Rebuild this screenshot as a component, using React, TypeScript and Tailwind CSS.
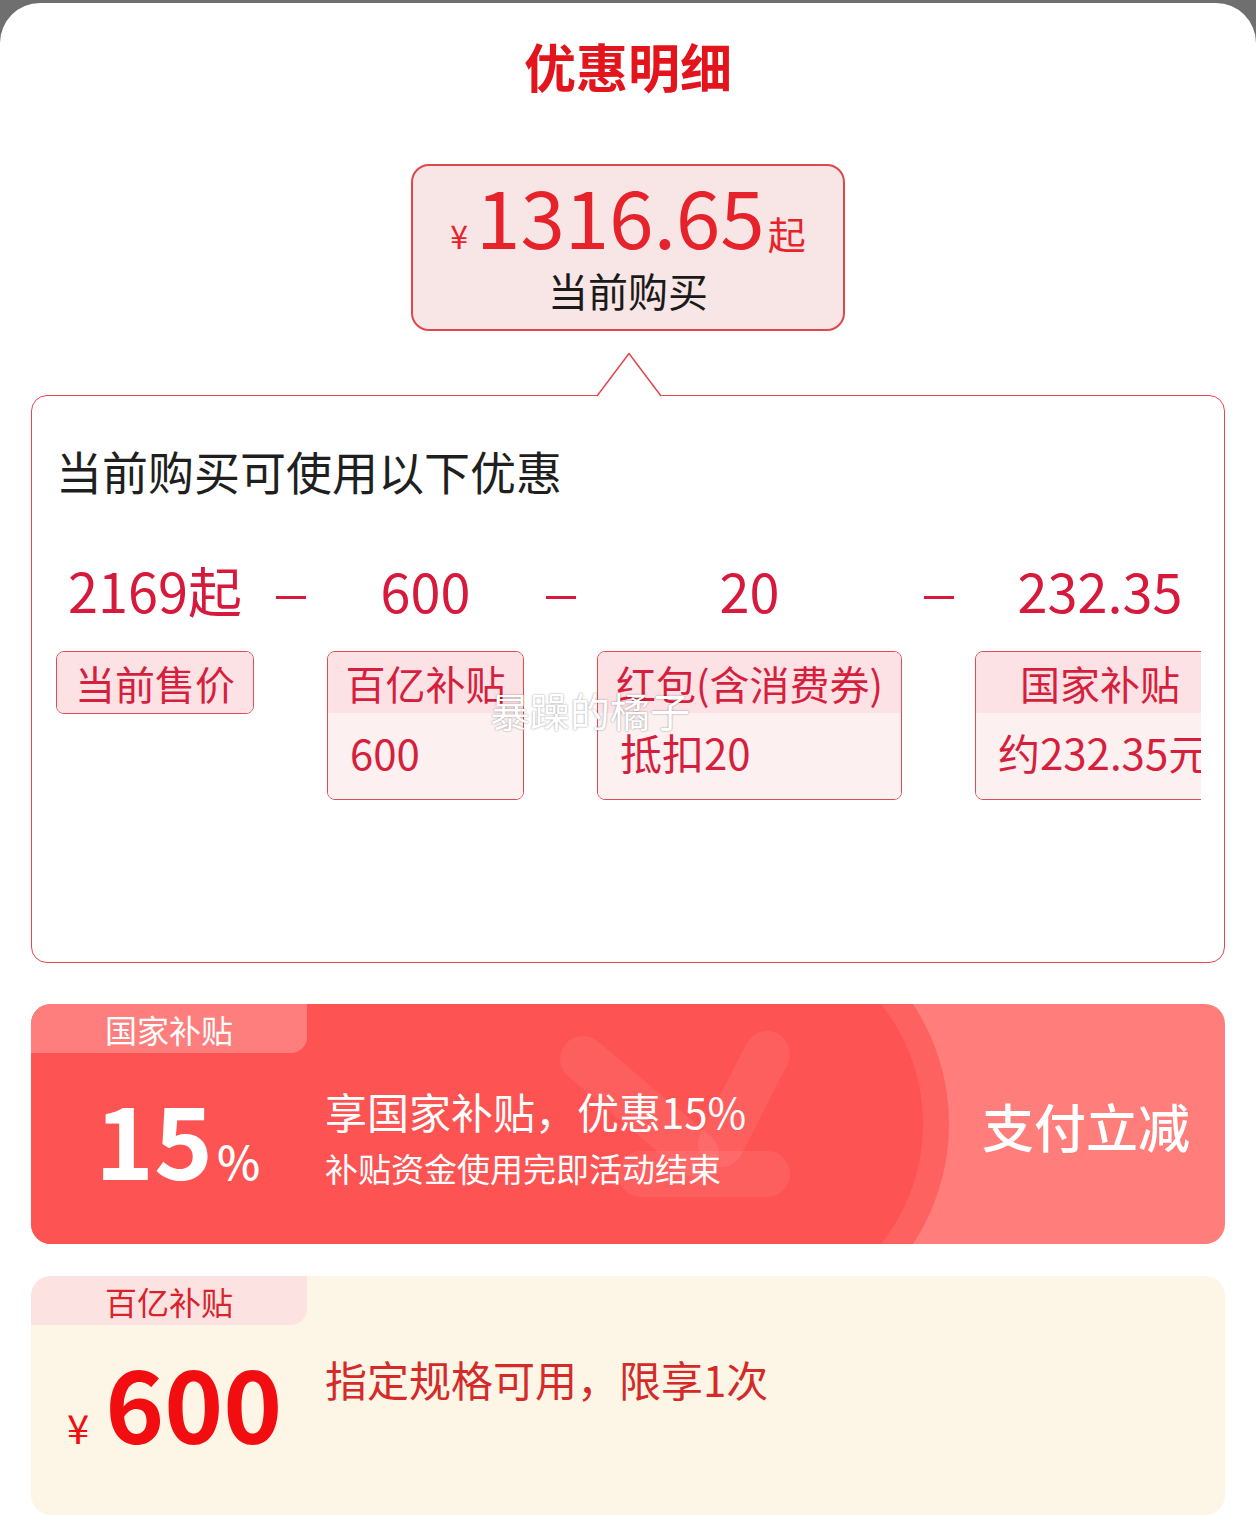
import React from 'react';

type Deal = {
  amount: string;
  label: string;
  detail?: string;
  width: string;
};

const deals: Deal[] = [
  { amount: '2169起', label: '当前售价', width: 'w-[198px]' },
  { amount: '600', label: '百亿补贴', detail: '600', width: 'w-[197px]' },
  { amount: '20', label: '红包(含消费券)', detail: '抵扣20', width: 'w-[305px]' },
  { amount: '232.35', label: '国家补贴', detail: '约232.35元', width: 'w-[250px]' },
];

function DealColumn({ deal }: { deal: Deal }) {
  return (
    <div className={`${deal.width} flex shrink-0 flex-col items-center`}>
      <div className="whitespace-nowrap text-[54px] leading-[62px] text-[#d7193c]">{deal.amount}</div>
      <div className="mt-[30px] w-full overflow-hidden rounded-[8px] border-[1.5px] border-[#de4c57]">
        <div className="flex h-[61px] items-center justify-center whitespace-nowrap bg-[#fde2e5] text-[40px] leading-[48px] text-[#d61f3d]">
          {deal.label}
        </div>
        {deal.detail && (
          <div className="h-[86px] whitespace-nowrap bg-[#fdf0f0] pl-[22px] pt-[14px] text-[42px] leading-[50px] text-[#d61f3d]">
            {deal.detail}
          </div>
        )}
      </div>
    </div>
  );
}

function Minus() {
  return (
    <div className="w-[73px] shrink-0">
      <div className="mx-auto mt-[37px] h-[3px] w-[30px] bg-[#d7193c]" />
    </div>
  );
}

export default function App() {
  return (
    <div className="h-[1524px] w-[1256px] overflow-hidden bg-[#6f6f6f] font-['Noto_Sans_CJK_SC','Noto_Sans',sans-serif]">
      <div className="mt-[3px] h-[1521px] rounded-t-[40px] bg-white">
        {/* title */}
        <h1 className="pt-[33px] text-center text-[52px] font-bold leading-[60px] text-[#e3141c]">优惠明细</h1>

        {/* current price */}
        <div className="mx-auto mt-[68px] h-[167px] w-[434px] rounded-[18px] border-2 border-[#e0474c] bg-[#f8e5e5] pt-[5px]">
          <div className="flex h-[86px] items-baseline justify-center text-[#e6222b]">
            <span className="text-[32px] leading-none">¥</span>
            <span className="ml-[8px] text-[80px] leading-[86px]">1316.65</span>
            <span className="ml-[3px] text-[38px] leading-none">起</span>
          </div>
          <div className="mt-[9px] text-center text-[40px] leading-[48px] text-[#1a1a1a]">当前购买</div>
        </div>

        {/* breakdown */}
        <div className="relative mx-[31px] mt-[64px] h-[568px] rounded-[16px] border-[1.5px] border-[#e2484e] bg-white px-[24px] pt-[47px]">
          <svg className="absolute left-[564px] top-[-44px]" width="66" height="46" viewBox="0 0 66 46">
            <polygon points="0,45 33,1 66,45" fill="white" />
            <polyline points="1,44 33,1.5 65,44" fill="none" stroke="#e2484e" strokeWidth="1.5" strokeLinejoin="round" />
          </svg>
          <div className="text-[46px] leading-[54px] text-[#1f1f1f]">当前购买可使用以下优惠</div>
          <div className="mt-[62px] flex w-[1145px] overflow-hidden">
            <DealColumn deal={deals[0]} />
            <Minus />
            <DealColumn deal={deals[1]} />
            <Minus />
            <DealColumn deal={deals[2]} />
            <Minus />
            <DealColumn deal={deals[3]} />
          </div>
          <div className="absolute left-[458px] top-[294px] whitespace-nowrap text-[40px] leading-[40px] text-white [text-shadow:0_0_2px_rgba(0,0,0,0.45)]">
            暴躁的橘子
          </div>
        </div>

        {/* national subsidy */}
        <div className="relative mx-[31px] mt-[41px] flex h-[240px] items-center overflow-hidden rounded-[20px] bg-[#ff7e7b] pt-[26px] text-white">
          <svg className="absolute inset-0" width="1194" height="240" viewBox="0 0 1194 240">
            <circle cx="700" cy="120" r="218" fill="#fe6260" />
            <circle cx="700" cy="120" r="192" fill="#fd5352" />
            <rect x="0" y="0" width="700" height="240" fill="#fd5352" />
            <g stroke="white" strokeOpacity="0.07" strokeWidth="46" strokeLinecap="round" fill="none">
              <line x1="552" y1="55" x2="665" y2="150" />
              <line x1="736" y1="50" x2="690" y2="140" />
              <line x1="610" y1="170" x2="736" y2="170" />
            </g>
          </svg>
          <div className="absolute left-0 top-0 flex h-[49px] w-[276px] items-center justify-center rounded-br-[16px] bg-white/25 text-[32px] leading-[40px]">
            国家补贴
          </div>
          <div className="relative flex w-[294px] shrink-0 items-baseline pl-[64px]">
            <span className="text-[100px] font-bold leading-[110px]">15</span>
            <span className="ml-[4px] text-[46px] font-medium leading-none">%</span>
          </div>
          <div className="relative flex-1">
            <div className="text-[42px] leading-[50px]">享国家补贴，优惠15%</div>
            <div className="mt-[12px] text-[33px] leading-[41px]">补贴资金使用完即活动结束</div>
          </div>
          <div className="relative pb-[22px] pr-[35px] text-[52px] font-medium leading-[60px]">支付立减</div>
        </div>

        {/* billion subsidy */}
        <div className="relative mx-[31px] mt-[32px] flex h-[239px] items-start rounded-[20px] bg-[#fdf6e6] pt-[70px]">
          <div className="absolute left-0 top-0 flex h-[49px] w-[276px] items-center justify-center rounded-br-[16px] rounded-tl-[20px] bg-[#fde2e2] text-[32px] leading-[40px] text-[#d9232b]">
            百亿补贴
          </div>
          <div className="flex w-[294px] shrink-0 items-baseline pl-[36px] text-[#f20d10]">
            <span className="text-[40px] leading-none">¥</span>
            <span className="ml-[16px] text-[100px] font-bold leading-[110px]">600</span>
          </div>
          <div className="mt-[8px] text-[42px] leading-[50px] text-[#d42a2a]">指定规格可用，限享1次</div>
        </div>
      </div>
    </div>
  );
}
